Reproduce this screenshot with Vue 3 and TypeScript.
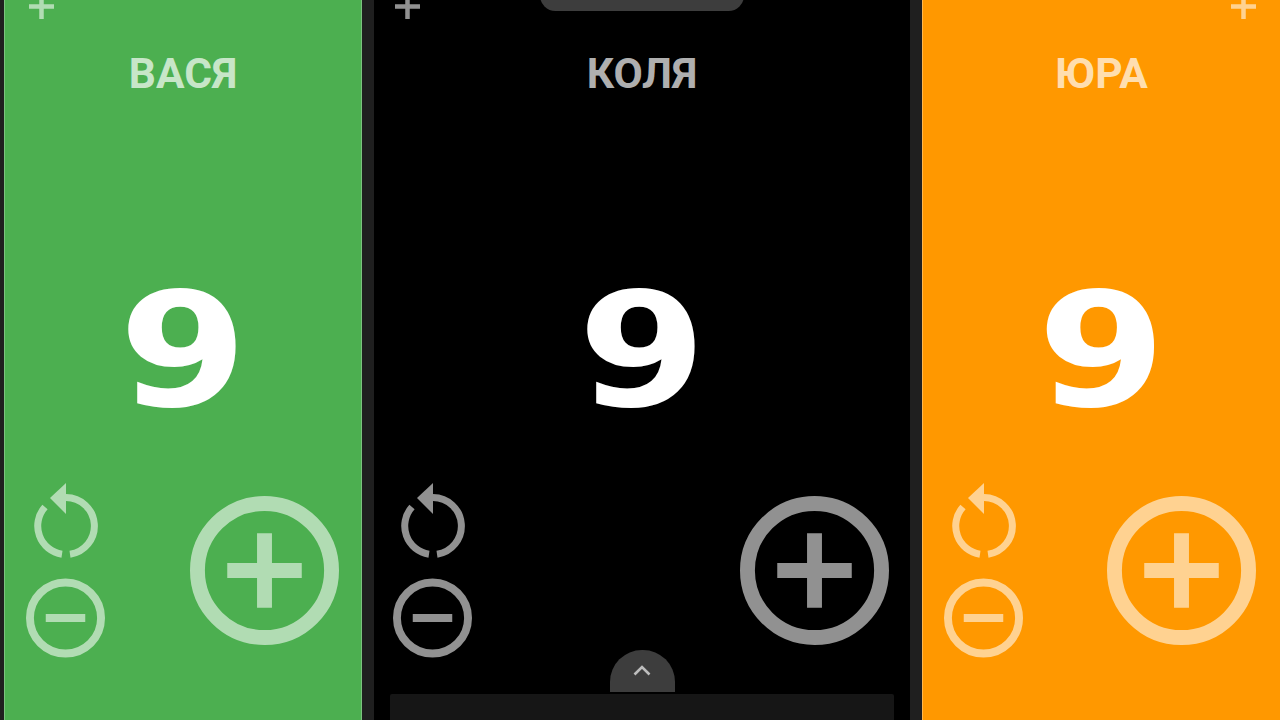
<script setup lang="ts">
interface Player {
  name: string;
  score: number;
  tone: string;
}

const players: Player[] = [
  { name: 'ВАСЯ', score: 9, tone: 'green' },
  { name: 'КОЛЯ', score: 9, tone: 'black' },
  { name: 'ЮРА', score: 9, tone: 'orange' },
];
</script>

<template>
  <div class="board">
    <section v-for="p in players" :key="p.name" class="panel" :class="p.tone">
      <button type="button" class="corner" aria-label="Add player">
        <svg width="25" height="25" viewBox="0 0 25 25">
          <path d="M0 12.5H25M12.5 0V25" class="line" stroke-width="4.5" />
        </svg>
      </button>
      <h2 class="name">{{ p.name }}</h2>
      <div class="score">{{ p.score }}</div>
      <div class="controls">
        <div class="small">
          <button type="button" aria-label="Reset">
            <svg width="64" height="76" viewBox="0 0 64 76">
              <path d="M32 14.5A28.5 28.5 0 0 1 36 71.2" class="line" stroke-width="7" />
              <path d="M28 71.2A28.5 28.5 0 0 1 11 24" class="line" stroke-width="7" />
              <path d="M16 15L32 0V31Z" class="fill" />
            </svg>
          </button>
          <button type="button" aria-label="Minus one">
            <svg width="79" height="80" viewBox="0 0 80 80">
              <circle cx="40" cy="40" r="36" class="line" stroke-width="8" />
              <path d="M20 40H60" class="line" stroke-width="8" />
            </svg>
          </button>
        </div>
        <button type="button" aria-label="Plus one">
          <svg width="149" height="149" viewBox="0 0 150 150">
            <circle cx="75" cy="75" r="67.5" class="line" stroke-width="15" />
            <path d="M37.5 75H112.5M75 37.5V112.5" class="line" stroke-width="15" />
          </svg>
        </button>
      </div>
    </section>

    <div class="notch"></div>
    <div class="sheet">
      <button type="button" class="handle" aria-label="Open">
        <svg width="18" height="12" viewBox="0 0 18 12">
          <path d="M1.5 10.5L9 3L16.5 10.5" fill="none" stroke="#bdbdbd" stroke-width="2.6" />
        </svg>
      </button>
      <div class="tray"></div>
    </div>
  </div>
</template>

<style>
html,
body {
  margin: 0;
  background: #1f1f1f;
}
</style>

<style scoped>
.board {
  position: relative;
  display: grid;
  grid-template-columns: 358px 1fr 358px;
  gap: 12px;
  width: 1280px;
  height: 720px;
  padding-left: 4px;
  box-sizing: border-box;
  background: #1f1f1f;
  overflow: hidden;
  font-family: Roboto, "Liberation Sans", sans-serif;
}

.panel {
  display: flex;
  flex-direction: column;
  height: 720px;
  box-sizing: border-box;
  overflow: hidden;
  color: #fff;
}
.green {
  background: #4caf50;
  border-left: 1px solid #7cc27f;
  border-right: 1px solid #7cc27f;
}
.black { background: #000; }
.orange {
  background: #ff9800;
  border-left: 1px solid #ffb74d;
}

button {
  display: block;
  padding: 0;
  border: 0;
  background: none;
  cursor: pointer;
}
svg { display: block; }

.line {
  fill: none;
  stroke: #fff;
  stroke-opacity: 0.57;
}
.fill {
  fill: #fff;
  fill-opacity: 0.57;
}

.corner {
  align-self: flex-start;
  margin: -6px 0 0 24px;
}
.black .corner { margin-left: 21px; }
.orange .corner {
  align-self: flex-end;
  margin-right: 24px;
}

.name {
  margin: 29px 0 0;
  font-size: 42.5px;
  line-height: 52px;
  font-weight: 700;
  text-align: center;
  color: rgba(255, 255, 255, 0.7);
}

.score {
  margin-top: 161px;
  height: 180px;
  font-family: "DejaVu Sans", sans-serif;
  font-size: 158px;
  line-height: 180px;
  font-weight: 700;
  text-align: center;
  transform: scaleX(1.17);
}

.controls {
  display: flex;
  justify-content: space-between;
  align-items: center;
  margin-top: 42px;
  padding: 0 22px 0 21px;
}
.black .controls { padding: 0 21px 0 19px; }
.orange .controls { padding: 0 24px 0 21px; }

.small {
  display: flex;
  flex-direction: column;
  align-items: center;
  gap: 19px;
}

/* phone chrome lying over the screen */
.notch {
  position: absolute;
  top: -20px;
  left: 540px;
  width: 204px;
  height: 31px;
  border-radius: 16px;
  background: #3d3d3d;
}
.sheet {
  position: absolute;
  left: 390px;
  bottom: 0;
  width: 504px;
  display: flex;
  flex-direction: column;
  align-items: center;
  gap: 2px;
}
.handle {
  display: flex;
  justify-content: center;
  padding-top: 14px;
  width: 65px;
  height: 42px;
  box-sizing: border-box;
  border-radius: 32px 32px 0 0;
  background: #3d3d3d;
}
.tray {
  width: 100%;
  height: 26px;
  border-radius: 2px 2px 0 0;
  background: #161616;
}
</style>
